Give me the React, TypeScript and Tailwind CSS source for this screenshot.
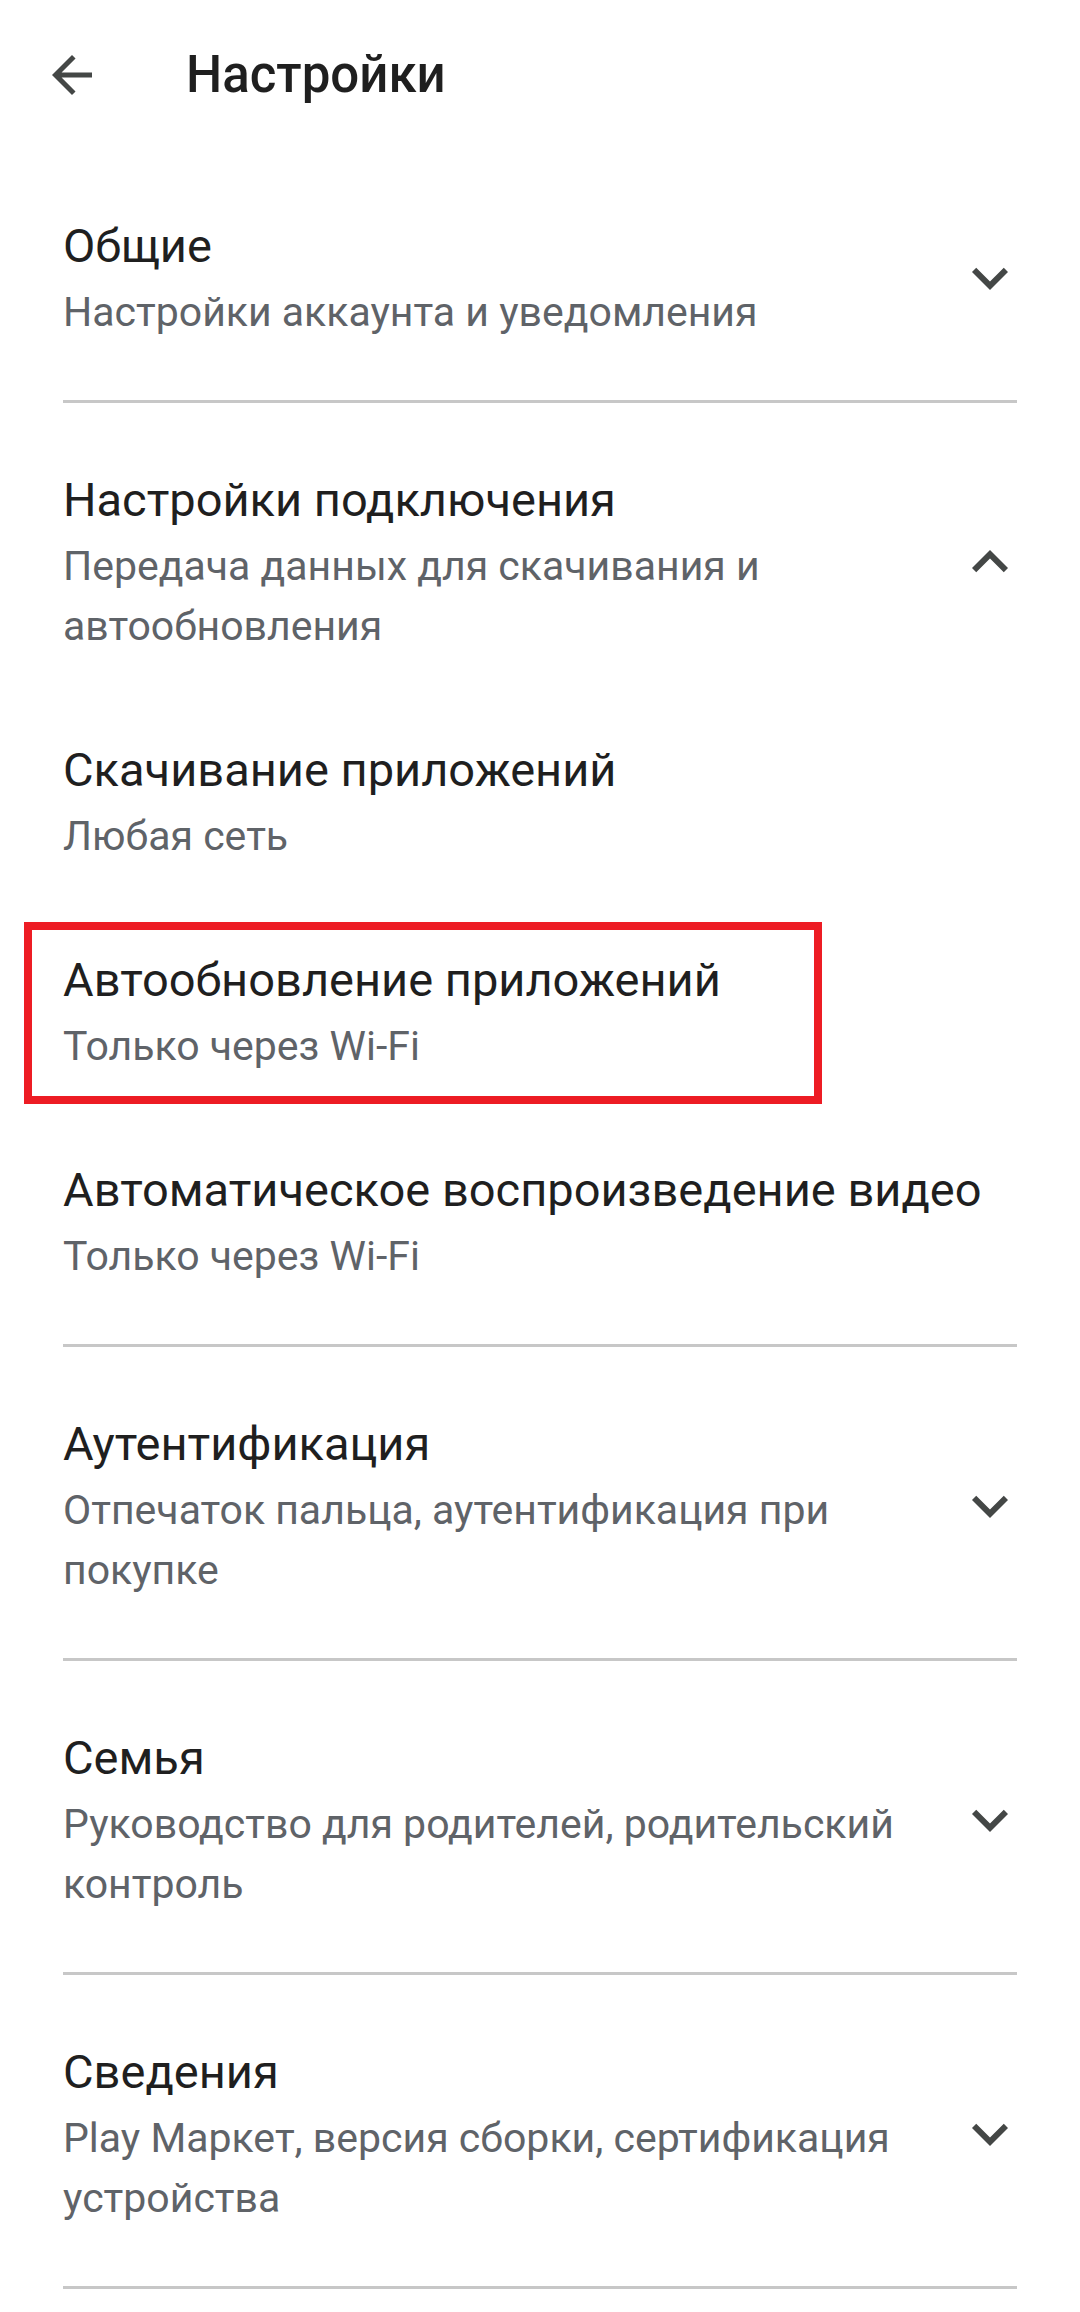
const FONT = { fontFamily: "Roboto, 'Noto Sans', sans-serif" };

const ChevronDown = () => (
  <svg viewBox="0 0 24 24" className="w-[72px] h-[72px]" fill="#444746">
    <path d="M16.59 8.59L12 13.17 7.41 8.59 6 10l6 6 6-6z" />
  </svg>
);

const ChevronUp = () => (
  <svg viewBox="0 0 24 24" className="w-[72px] h-[72px]" fill="#444746">
    <path d="M12 8l-6 6 1.41 1.41L12 10.83l4.59 4.58L18 14z" />
  </svg>
);

const BackArrow = () => (
  <svg viewBox="0 0 24 24" className="w-[60px] h-[60px]" fill="#444746">
    <path d="M20 11H7.83l5.59-5.59L12 4l-8 8 8 8 1.41-1.41L7.83 13H20v-2z" />
  </svg>
);

type Section = {
  title: string;
  subtitle: string;
  open?: boolean;
};

const sections: Section[] = [
  { title: "Общие", subtitle: "Настройки аккаунта и уведомления" },
  {
    title: "Настройки подключения",
    subtitle: "Передача данных для скачивания и автообновления",
    open: true,
  },
  {
    title: "Аутентификация",
    subtitle: "Отпечаток пальца, аутентификация при покупке",
  },
  {
    title: "Семья",
    subtitle: "Руководство для родителей, родительский контроль",
  },
  {
    title: "Сведения",
    subtitle: "Play Маркет, версия сборки, сертификация устройства",
  },
];

const subItems = [
  { title: "Скачивание приложений", subtitle: "Любая сеть" },
  { title: "Автообновление приложений", subtitle: "Только через Wi-Fi", marked: true },
  { title: "Автоматическое воспроизведение видео", subtitle: "Только через Wi-Fi" },
];

const TextBlock = ({ title, subtitle }: { title: string; subtitle: string }) => (
  <div>
    <div className="text-[47px] leading-[64px] text-[#1f1f1f]">{title}</div>
    <div className="mt-[4px] text-[41px] leading-[60px] text-[#5f6368]">{subtitle}</div>
  </div>
);

export default function App() {
  return (
    <div className="w-[1080px] min-h-[2312px] bg-white" style={FONT}>
      {/* Toolbar */}
      <header className="h-[149px] flex items-center pl-[42px]">
        <BackArrow />
        <h1 className="ml-[84px] text-[51px] leading-[64px] font-medium text-[#1f1f1f]">
          Настройки
        </h1>
      </header>

      {/* Settings list */}
      <main className="px-[63px]">
        {sections.map((s) => (
          <section
            key={s.title}
            className="pt-[65px] pb-[58px] border-b-[3px] border-[#c7c7c7]"
          >
            <div className="flex items-center">
              <div className="flex-1">
                <TextBlock title={s.title} subtitle={s.subtitle} />
              </div>
              <div className="ml-[16px] -mr-[9px] shrink-0">
                {s.open ? <ChevronUp /> : <ChevronDown />}
              </div>
            </div>

            {s.open &&
              subItems.map((item) => (
                <div key={item.title} className="pt-[82px]">
                  <div className="relative">
                    <TextBlock title={item.title} subtitle={item.subtitle} />
                    {item.marked && (
                      <span className="absolute top-[-26px] bottom-[-28px] left-[-39px] w-[798px] border-[8px] border-[#ed1c24]" />
                    )}
                  </div>
                </div>
              ))}
          </section>
        ))}
      </main>
    </div>
  );
}
